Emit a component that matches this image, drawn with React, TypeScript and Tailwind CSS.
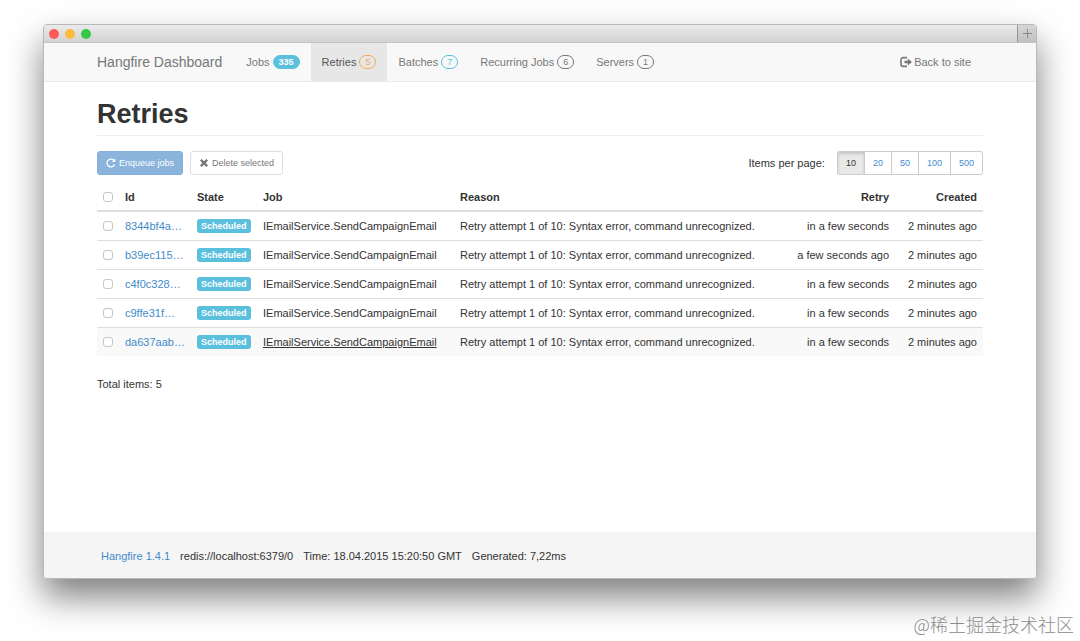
import type React from "react"

const navItems = [
  { title: "Jobs", count: "335", badge: "border-[#5bc0de] bg-[#5bc0de] text-white font-bold", active: false },
  { title: "Retries", count: "5", badge: "border-[#f0ad4e] text-[#f0ad4e]", active: true },
  { title: "Batches", count: "7", badge: "border-[#5bc0de] text-[#5bc0de]", active: false },
  { title: "Recurring Jobs", count: "6", badge: "border-[#777777] text-[#777777]", active: false },
  { title: "Servers", count: "1", badge: "border-[#777777] text-[#777777]", active: false },
]

const jobs = [
  { id: "8344bf4a…", retry: "in a few seconds", hovered: false },
  { id: "b39ec115…", retry: "a few seconds ago", hovered: false },
  { id: "c4f0c328…", retry: "in a few seconds", hovered: false },
  { id: "c9ffe31f…", retry: "in a few seconds", hovered: false },
  { id: "da637aab…", retry: "in a few seconds", hovered: true },
]

const pageSizes = [10, 20, 50, 100, 500]

export default function App() {
  return (
    <div className="relative flex min-h-screen flex-col bg-white px-[43px] pt-6 pb-[62px] font-['Liberation_Sans',Arial,sans-serif] text-[11px] leading-4 text-[#333333]">
      <div className="flex flex-1 flex-col overflow-hidden rounded-[4px] border border-[#b9b9b9] bg-white shadow-[0_18px_34px_rgba(0,0,0,0.5)]">
        <TitleBar />
        <Navbar />
        <main className="flex-1 px-[53px]">
          <h1 className="mb-[15px] border-b border-[#eeeeee] pt-[18px] pb-[6px] text-[27px] leading-[29px] font-bold">
            Retries
          </h1>
          <Toolbar />
          <JobsTable />
          <p className="mt-5">Total items: 5</p>
        </main>
        <footer className="bg-[#f5f5f5] px-[57px] pt-4 pb-[14px]">
          <ul className="flex gap-[10px]">
            <li>
              <a href="#" className="text-[#428bca]">
                Hangfire 1.4.1
              </a>
            </li>
            <li>redis://localhost:6379/0</li>
            <li>Time: 18.04.2015 15:20:50 GMT</li>
            <li>Generated: 7,22ms</li>
          </ul>
        </footer>
      </div>
      <div className="absolute right-[6px] bottom-[3px] font-['Noto_Sans_CJK_SC',sans-serif] text-[18px] leading-7 font-light text-[#8c8c8c]">
        @稀土掘金技术社区
      </div>
    </div>
  )
}

function TitleBar() {
  return (
    <div className="flex h-[18px] items-center border-b border-[#c4c4c4] bg-linear-to-b from-[#ebebeb] to-[#d2d2d2]">
      <div className="flex flex-1 gap-[6px] pl-[5px]">
        <span className="size-[10px] rounded-full bg-[#fc5b57]" />
        <span className="size-[10px] rounded-full bg-[#fdbc40]" />
        <span className="size-[10px] rounded-full bg-[#34c84a]" />
      </div>
      <button
        aria-label="New tab"
        className="flex h-full w-[19px] items-center justify-center border-l border-[#969696] bg-linear-to-b from-[#d6d6d6] to-[#c0c0c0]"
      >
        <svg width="9" height="9" viewBox="0 0 9 9" stroke="#888888" strokeWidth="1">
          <path d="M4.5 0v9M0 4.5h9" />
        </svg>
      </button>
    </div>
  )
}

function Navbar() {
  return (
    <nav className="flex h-[39px] border-b border-[#eaeaea] bg-[#f8f8f8] pl-[53px] text-[#777777]">
      <a href="#" className="flex items-center pr-[13px] text-[14px]">
        Hangfire Dashboard
      </a>
      {navItems.map((item) => (
        <a
          key={item.title}
          href="#"
          className={`flex items-center gap-[3px] px-[11px] ${item.active ? "bg-[#e7e7e7] text-[#555555]" : ""}`}
        >
          {item.title}
          <span className={`rounded-full border px-[5px] text-[9px] leading-3 ${item.badge}`}>{item.count}</span>
        </a>
      ))}
      <a href="#" className="mr-[65px] ml-auto flex items-center gap-[2px]">
        <LogOutIcon />
        Back to site
      </a>
    </nav>
  )
}

function Toolbar() {
  return (
    <div className="flex items-center gap-[7px] text-[9px]">
      <ToolbarButton className="border-[#85b0d9] bg-[#8ab4dc] text-white" icon={<RepeatIcon />}>
        Enqueue jobs
      </ToolbarButton>
      <ToolbarButton className="border-[#dddddd] bg-white text-[#777777]" icon={<RemoveIcon />}>
        Delete selected
      </ToolbarButton>
      <div className="ml-auto flex items-center gap-3">
        <span className="text-[11px]">Items per page:</span>
        <div className="flex h-6 overflow-hidden rounded-[3px] border border-r-0 border-[#cccccc]">
          {pageSizes.map((size) => (
            <a
              key={size}
              href="#"
              className={`flex items-center border-r border-[#cccccc] px-2 last:rounded-r-[3px] ${
                size === 10 ? "bg-[#e9e9e9] text-[#333333] shadow-[inset_0_2px_3px_rgba(0,0,0,0.16)]" : "text-[#428bca]"
              }`}
            >
              {size}
            </a>
          ))}
        </div>
      </div>
    </div>
  )
}

function ToolbarButton({
  children,
  className,
  icon,
}: {
  children: React.ReactNode
  className: string
  icon: React.ReactNode
}) {
  return (
    <button className={`flex h-6 items-center gap-[3px] rounded-[3px] border px-2 ${className}`}>
      {icon}
      {children}
    </button>
  )
}

function JobsTable() {
  return (
    <table className="w-full table-fixed border-separate border-spacing-0 whitespace-nowrap">
      <thead>
        <tr className="h-[37px] text-left [&>th]:border-b-2 [&>th]:border-[#dddddd] [&>th]:px-[6px] [&>th]:pt-2">
          <th className="w-[22px]">
            <Checkbox label="Select all jobs" />
          </th>
          <th className="w-[72px]">Id</th>
          <th className="w-[66px]">State</th>
          <th className="w-[197px]">Job</th>
          <th>Reason</th>
          <th className="w-[110px] text-right">Retry</th>
          <th className="w-[88px] text-right">Created</th>
        </tr>
      </thead>
      <tbody>
        {jobs.map((job, i) => (
          <tr
            key={job.id}
            className={`[&>td]:border-[#dddddd] [&>td]:px-[6px] ${i > 0 ? "h-[29px] [&>td]:border-t" : "h-7"} ${
              job.hovered ? "bg-[#f9f9f9]" : ""
            }`}
          >
            <td>
              <Checkbox label={`Select job ${job.id}`} />
            </td>
            <td>
              <a href="#" className="text-[#428bca]">
                {job.id}
              </a>
            </td>
            <td>
              <span className="block w-fit rounded-[3px] bg-[#5bc0de] px-1 text-[9px] leading-[14px] font-bold text-white">
                Scheduled
              </span>
            </td>
            <td>
              <a href="#" className={job.hovered ? "underline" : ""}>
                IEmailService.SendCampaignEmail
              </a>
            </td>
            <td>Retry attempt 1 of 10: Syntax error, command unrecognized.</td>
            <td className="text-right">{job.retry}</td>
            <td className="text-right">2 minutes ago</td>
          </tr>
        ))}
      </tbody>
    </table>
  )
}

function Checkbox({ label }: { label: string }) {
  return (
    <input
      type="checkbox"
      aria-label={label}
      className="block size-[10px] appearance-none rounded-[3px] border border-[#c6c6c6] bg-white checked:bg-[#428bca]"
    />
  )
}

function RepeatIcon() {
  return (
    <svg width="10" height="10" viewBox="0 0 10 10" fill="none">
      <path d="M8.6 6.3A3.9 3.9 0 1 1 7.8 2.3" stroke="currentColor" strokeWidth="1.3" />
      <path d="M9.3 0.6V4H5.9z" fill="currentColor" />
    </svg>
  )
}

function RemoveIcon() {
  return (
    <svg width="10" height="10" viewBox="0 0 10 10">
      <path
        d="M1 2.6L2.6 1 5 3.2 7.4 1 9 2.6 6.8 5 9 7.4 7.4 9 5 6.8 2.6 9 1 7.4 3.2 5z"
        fill="currentColor"
      />
    </svg>
  )
}

function LogOutIcon() {
  return (
    <svg width="12" height="12" viewBox="0 0 12 12" fill="none">
      <path d="M7 1.6H3.2A2.2 2.2 0 0 0 1 3.8v4.4a2.2 2.2 0 0 0 2.2 2.2H7" stroke="currentColor" strokeWidth="1.6" />
      <path d="M4.5 4.8h3.3V2.6L12 6 7.8 9.4V7.2H4.5z" fill="currentColor" />
    </svg>
  )
}
